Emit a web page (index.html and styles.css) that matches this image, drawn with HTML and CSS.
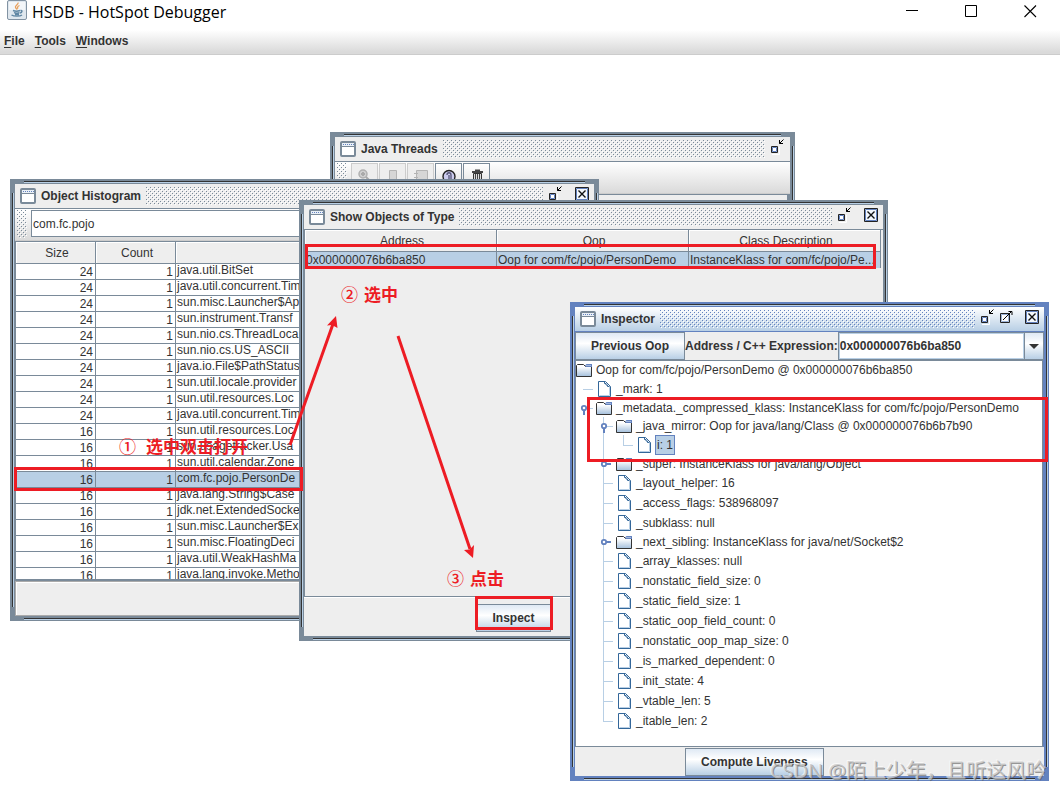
FILE: index.html
```html
<!DOCTYPE html>
<html lang="en">
<head>
<meta charset="utf-8">
<title>HSDB - HotSpot Debugger</title>
<link rel="stylesheet" href="styles.css">
</head>
<body>
<svg class="defs" aria-hidden="true">
  <defs>
    <linearGradient id="fold" x1="0" y1="0" x2="0" y2="1"><stop offset="0.2" stop-color="#fff"/><stop offset="1" stop-color="#a3bfdc"/></linearGradient>
  </defs>
  <symbol id="i-frame" viewBox="0 0 16 16">
    <rect x="1" y="1" width="14" height="14" rx="1" fill="#fff" stroke="#7a8a99" stroke-width="2"/>
    <path d="M2 2h12v3H2z" fill="#eaf0f6"/><path d="M3 3.500h11" stroke="#6382bf" stroke-dasharray="1 1"/><path d="M2 5.500h12" stroke="#7a8a99"/>
  </symbol>
  <symbol id="i-min" viewBox="0 0 16 16">
    <path d="M2 15.500h7.500V8" fill="none" stroke="#fff"/><path d="M1.500 7.500h6v6h-6z" fill="#fff" stroke="#222" /><path d="M2.500 8.500h4v4h-4z" fill="#fff" stroke="#6382bf"/>
    <path d="M9.500 1v3.500H13M9.500 4.500l4-4" fill="none" stroke="#000"/>
  </symbol>
  <symbol id="i-max" viewBox="0 0 16 16">
    <path d="M1.500 4.500h9v9h-9z" fill="#fff" stroke="#222"/><path d="M2.500 5.500h7v7h-7z" fill="none" stroke="#9db4d8"/>
    <path d="M4 11l9-9M9.500 2.500h3.500v3.500" fill="none" stroke="#000"/>
  </symbol>
  <symbol id="i-close" viewBox="0 0 16 16">
    <path d="M1.500 1.500h13v13h-13z" fill="#fff" stroke="#222"/><path d="M2.500 2.500h11v11h-11z" fill="#f4f8fc" stroke="#6382bf"/>
    <path d="M4.500 4.500l7 7M11.500 4.500l-7 7" stroke="#111" stroke-width="1.400"/>
  </symbol>
  <symbol id="i-folder" viewBox="0 0 16 18">
    <path d="M.5 15.500V4.500l1-1h6l2 2h6v10z" fill="url(#fold)" stroke="#333"/>
    <path d="M9 4.500l1.500-1.500H16v3h-6z" fill="#6382bf"/><path d="M10 4.500h5" stroke="#a3b8dd"/>
  </symbol>
  <symbol id="i-leaf" viewBox="0 0 16 20">
    <path d="M2.500 2.500h7l5 5v10h-12z" fill="#fff" stroke="#336699"/><path d="M3.500 16.500h10V8" fill="none" stroke="#b8cfe5"/>
    <path d="M8.500 3v1.500h1.500v1.500h1.500v1.500h2" fill="none" stroke="#336699"/>
  </symbol>
  <symbol id="i-open" viewBox="0 0 20 18">
    <path d="M11 9.500h6" stroke="#b8cfe5"/><path d="M8 10v6" stroke="#6382bf" stroke-width="2"/><circle cx="8" cy="9" r="2.200" fill="#fff" stroke="#6382bf" stroke-width="1.800"/>
  </symbol>
  <symbol id="i-shut" viewBox="0 0 20 18">
    <path d="M7.500 0v18" stroke="#b8cfe5"/><path d="M9 9h6" stroke="#6382bf" stroke-width="2"/><circle cx="8" cy="9" r="2.200" fill="#fff" stroke="#6382bf" stroke-width="1.800"/>
  </symbol>
</svg>

<header class="titlebar">
  <svg class="java" width="20" height="20" viewBox="0 0 20 20">
    <rect x=".5" y=".5" width="19" height="19" rx="1.500" fill="#dfe7ee" stroke="#8293a3"/>
    <path d="M2 2h16v8H2z" fill="#f3f6f9"/>
    <path d="M11 2.500c1 2-3.500 3-2.500 5 .4.900 1.300 1.300 1.500 2.200M12.500 5.500c-1.500.7-2.700 1.600-1.500 3.200" fill="none" stroke="#e8a05c" stroke-width="1.300"/>
    <path d="M6 10.500c2 .8 5 .8 7 0M7 12.700c2 .6 4 .6 5.500 0M13.500 10.500c2-.5 2 2-.5 2.500M4.500 15c2.500 1.500 8.500 1.500 10.500 0M8 14.500h4" fill="none" stroke="#5f86a3" stroke-width="1.400"/>
  </svg>
  <h1>HSDB - HotSpot Debugger</h1>
  <div class="sysbtns">
    <button aria-label="Minimize"><svg width="13" height="13"><path d="M0 5.500h12" stroke="#000"/></svg></button>
    <button aria-label="Maximize"><svg width="13" height="13"><path d="M.5.5h11v11H.5z" fill="none" stroke="#000"/></svg></button>
    <button aria-label="Close"><svg width="13" height="13"><path d="M.5.5l11.500 11.500M12 .5L.5 12" stroke="#000" stroke-width="1.100"/></svg></button>
  </div>
</header>
<nav class="menubar">
  <button><u>F</u>ile</button><button><u>T</u>ools</button><button><u>W</u>indows</button>
</nav>

<main class="desktop">
  <section class="frame threads">
    <div class="cap"><svg class="ico"><use href="#i-frame"/></svg><h2>Java Threads</h2><i class="bumps"></i>
      <button aria-label="Minimize"><svg class="ico"><use href="#i-min"/></svg></button></div>
    <div class="toolbar">
      <i class="bumps grip"></i>
      <div class="tools">
      <button disabled aria-label="Inspect Thread"><svg width="16" height="16"><circle cx="6" cy="5" r="4" fill="#d0d0d0" stroke="#b0b0b0" stroke-width="1.500"/><path d="M6 3v4M4 5h4M9 8l5 5" stroke="#aaa" stroke-width="2"/></svg></button>
      <button disabled aria-label="Stack Memory"><svg width="16" height="16"><path d="M4.500 1.500h7v13h-7z" fill="#d6d6d6" stroke="#b4b4b4"/></svg></button>
      <button disabled aria-label="Java Stack Trace"><svg width="16" height="16"><path d="M3.500 1.500h11v11h-11zM1 4.500h4M1 8.500h4" fill="#d6d6d6" stroke="#b4b4b4"/></svg></button>
      <button aria-label="Thread Information"><svg width="16" height="16"><circle cx="8" cy="7.500" r="6" fill="#ccccee" stroke="#222" stroke-width="1.400"/><path d="M6 6c0-3 4-3 4 0v6M8 6v6M6 12h5" fill="none" stroke="#555577" stroke-width="1.300"/></svg></button>
      <button aria-label="Find Crashes"><svg width="16" height="16"><path d="M3 2h11v2H3zM6 .5h5V2H6z" fill="#444"/><path d="M4.500 4.500h8v10h-8z" fill="#ddd" stroke="#333"/><path d="M6.500 5v9M8.500 5v9M10.500 5v9" stroke="#444"/></svg></button>
      </div>
    </div>
    <div class="pane"></div>
  </section>

  <section class="frame histogram">
    <div class="cap"><svg class="ico"><use href="#i-frame"/></svg><h2>Object Histogram</h2><i class="bumps"></i>
      <button aria-label="Minimize"><svg class="ico"><use href="#i-min"/></svg></button><button class="shut" aria-label="Close"><svg class="ico"><use href="#i-close"/></svg></button></div>
    <div class="toolbar search"><i class="bumps grip"></i><input type="text" aria-label="Find class" value="com.fc.pojo"></div>
    <div class="scroll">
    <table class="hist">
      <thead><tr><th class="num">Size</th><th class="num">Count</th><th></th></tr></thead>
      <tbody>
        <tr><td>24</td><td>1</td><td>java.util.BitSet</td></tr>
        <tr><td>24</td><td>1</td><td>java.util.concurrent.Tim</td></tr>
        <tr><td>24</td><td>1</td><td>sun.misc.Launcher$Ap</td></tr>
        <tr><td>24</td><td>1</td><td>sun.instrument.Transf</td></tr>
        <tr><td>24</td><td>1</td><td>sun.nio.cs.ThreadLoca</td></tr>
        <tr><td>24</td><td>1</td><td>sun.nio.cs.US_ASCII</td></tr>
        <tr><td>24</td><td>1</td><td>java.io.File$PathStatus</td></tr>
        <tr><td>24</td><td>1</td><td>sun.util.locale.provider</td></tr>
        <tr><td>24</td><td>1</td><td>sun.util.resources.Loc</td></tr>
        <tr><td>24</td><td>1</td><td>java.util.concurrent.Tim</td></tr>
        <tr><td>16</td><td>1</td><td>sun.util.resources.Loc</td></tr>
        <tr><td>16</td><td>1</td><td>sun.usagetracker.Usa</td></tr>
        <tr><td>16</td><td>1</td><td>sun.util.calendar.Zone</td></tr>
        <tr class="sel"><td>16</td><td>1</td><td>com.fc.pojo.PersonDe</td></tr>
        <tr><td>16</td><td>1</td><td>java.lang.String$Case</td></tr>
        <tr><td>16</td><td>1</td><td>jdk.net.ExtendedSocke</td></tr>
        <tr><td>16</td><td>1</td><td>sun.misc.Launcher$Ex</td></tr>
        <tr><td>16</td><td>1</td><td>sun.misc.FloatingDeci</td></tr>
        <tr><td>16</td><td>1</td><td>java.util.WeakHashMa</td></tr>
        <tr><td>16</td><td>1</td><td>java.lang.invoke.Metho</td></tr>
      </tbody>
    </table>
    </div>
    <div class="foot"></div>
  </section>

  <section class="frame objects">
    <div class="cap"><svg class="ico"><use href="#i-frame"/></svg><h2>Show Objects of Type</h2><i class="bumps"></i>
      <button aria-label="Minimize"><svg class="ico"><use href="#i-min"/></svg></button><button class="shut" aria-label="Close"><svg class="ico"><use href="#i-close"/></svg></button></div>
    <div class="list">
    <table class="objs">
      <thead><tr><th>Address</th><th>Oop</th><th>Class Description</th></tr></thead>
      <tbody><tr class="sel"><td>0x000000076b6ba850</td><td>Oop for com/fc/pojo/PersonDemo</td><td>InstanceKlass for com/fc/pojo/Pe...</td></tr></tbody>
    </table>
    </div>
    <div class="actions"><button class="btn">Inspect</button></div>
  </section>

  <p class="note n1"><span>①</span><b>选中双击打开</b></p>
  <p class="note n2"><span>②</span><b>选中</b></p>
  <p class="note n3"><span>③</span><b>点击</b></p>
  <svg class="arrows" width="560" height="560" viewBox="0 55 560 560">
    <path d="M290 445L333 324M398 336L470 549" fill="none" stroke="#ed1c24" stroke-width="3"/>
    <path d="M336 316l1.500 12-5.500-3-5 .5zM473 558l-9-8 5.500-.5 4.500-4.500z" fill="#ed1c24"/>
  </svg>
  <i class="mark m1"></i><i class="mark m2"></i><i class="mark m3"></i>

  <section class="frame active inspector">
    <div class="cap"><svg class="ico"><use href="#i-frame"/></svg><h2>Inspector</h2><i class="bumps"></i>
      <button aria-label="Minimize"><svg class="ico"><use href="#i-min"/></svg></button><button class="grow" aria-label="Maximize"><svg class="ico"><use href="#i-max"/></svg></button><button class="shut" aria-label="Close"><svg class="ico"><use href="#i-close"/></svg></button></div>
    <div class="address">
      <button class="btn">Previous Oop</button>
      <label for="addr">Address / C++ Expression:</label>
      <div class="combo"><input id="addr" type="text" value="0x000000076b6ba850"><button aria-label="History"><svg width="10" height="5"><path d="M0 0h10L5 5z" fill="#333"/></svg></button></div>
    </div>
    <div class="tree">
      <div class="row"><svg class="fi"><use href="#i-folder"/></svg><span>Oop for com/fc/pojo/PersonDemo @ 0x000000076b6ba850</span></div>
      <div class="row leaf"><i class="dash"></i><svg class="li"><use href="#i-leaf"/></svg><span>_mark: 1</span></div>
      <div class="row"><svg class="hd"><use href="#i-open"/></svg><svg class="fi"><use href="#i-folder"/></svg><span>_metadata._compressed_klass: InstanceKlass for com/fc/pojo/PersonDemo</span></div>
      <div class="row"><i></i><svg class="hd line"><use href="#i-open"/></svg><svg class="fi"><use href="#i-folder"/></svg><span>_java_mirror: Oop for java/lang/Class @ 0x000000076b6b7b90</span></div>
      <div class="row leaf"><i></i><i class="line"></i><i class="dash end"></i><svg class="li"><use href="#i-leaf"/></svg><span class="picked">i: 1</span></div>
      <div class="row"><i></i><svg class="hd"><use href="#i-shut"/></svg><svg class="fi"><use href="#i-folder"/></svg><span>_super: InstanceKlass for java/lang/Object</span></div>
      <div class="row leaf"><i></i><i class="dash line"></i><svg class="li"><use href="#i-leaf"/></svg><span>_layout_helper: 16</span></div>
      <div class="row leaf"><i></i><i class="dash line"></i><svg class="li"><use href="#i-leaf"/></svg><span>_access_flags: 538968097</span></div>
      <div class="row leaf"><i></i><i class="dash line"></i><svg class="li"><use href="#i-leaf"/></svg><span>_subklass: null</span></div>
      <div class="row"><i></i><svg class="hd"><use href="#i-shut"/></svg><svg class="fi"><use href="#i-folder"/></svg><span>_next_sibling: InstanceKlass for java/net/Socket$2</span></div>
      <div class="row leaf"><i></i><i class="dash line"></i><svg class="li"><use href="#i-leaf"/></svg><span>_array_klasses: null</span></div>
      <div class="row leaf"><i></i><i class="dash line"></i><svg class="li"><use href="#i-leaf"/></svg><span>_nonstatic_field_size: 0</span></div>
      <div class="row leaf"><i></i><i class="dash line"></i><svg class="li"><use href="#i-leaf"/></svg><span>_static_field_size: 1</span></div>
      <div class="row leaf"><i></i><i class="dash line"></i><svg class="li"><use href="#i-leaf"/></svg><span>_static_oop_field_count: 0</span></div>
      <div class="row leaf"><i></i><i class="dash line"></i><svg class="li"><use href="#i-leaf"/></svg><span>_nonstatic_oop_map_size: 0</span></div>
      <div class="row leaf"><i></i><i class="dash line"></i><svg class="li"><use href="#i-leaf"/></svg><span>_is_marked_dependent: 0</span></div>
      <div class="row leaf"><i></i><i class="dash line"></i><svg class="li"><use href="#i-leaf"/></svg><span>_init_state: 4</span></div>
      <div class="row leaf"><i></i><i class="dash line"></i><svg class="li"><use href="#i-leaf"/></svg><span>_vtable_len: 5</span></div>
      <div class="row leaf"><i></i><i class="dash end"></i><svg class="li"><use href="#i-leaf"/></svg><span>_itable_len: 2</span></div>
    </div>
    <div class="liveness"><button class="btn">Compute Liveness</button></div>
  </section>
  <i class="mark m4"></i>
  <p class="watermark">CSDN @陌上少年，且听这风吟</p>
</main>
</body>
</html>
```
FILE: styles.css
```css
* { box-sizing: border-box; }
body { margin: 0; min-height: 100vh; display: flex; flex-direction: column; background: #fff; color: #333; font: 12px/14px "Liberation Sans", Arial, sans-serif; overflow: hidden; }
h1, h2, p { margin: 0; }
svg { display: block; flex: none; }
button, input { font: inherit; color: inherit; margin: 0; padding: 0; border: 0; background: none; }
.defs { position: absolute; width: 0; height: 0; }

.titlebar { display: flex; align-items: center; height: 24px; padding: 0 23px 0 7px; color: #000; }
.java { align-self: flex-start; margin-right: 5px; }
.titlebar h1 { font: 16px/24px "Open Sans", "Noto Sans", sans-serif; }
.sysbtns { display: flex; gap: 46px; margin-left: auto; padding-bottom: 2px; }
.menubar { display: flex; gap: 10px; align-items: center; height: 31px; padding: 4px 4px 0; background: linear-gradient(#fff 20%, #dadada 94%); border-bottom: 1px solid #ccc; }
.menubar button { font-weight: bold; }
.menubar u { text-underline-offset: 2px; }

.desktop { position: relative; flex: 1; }
.frame {
  --edge: #7a8a99; --dark: #333; --lite: #b8cfe5;
  position: absolute; display: flex; flex-direction: column; padding: 5px;
  background:
    linear-gradient(var(--dark), var(--dark)) 14px 2px / calc(100% - 28px) 1px no-repeat,
    linear-gradient(var(--lite), var(--lite)) 14px 3px / calc(100% - 28px) 1px no-repeat,
    linear-gradient(var(--dark), var(--dark)) 14px calc(100% - 2px) / calc(100% - 28px) 1px no-repeat,
    linear-gradient(var(--lite), var(--lite)) 14px calc(100% - 1px) / calc(100% - 28px) 1px no-repeat,
    linear-gradient(var(--dark), var(--dark)) 2px 14px / 1px calc(100% - 28px) no-repeat,
    linear-gradient(var(--lite), var(--lite)) 3px 14px / 1px calc(100% - 28px) no-repeat,
    linear-gradient(var(--dark), var(--dark)) calc(100% - 2px) 14px / 1px calc(100% - 28px) no-repeat,
    linear-gradient(var(--lite), var(--lite)) calc(100% - 1px) 14px / 1px calc(100% - 28px) no-repeat,
    var(--edge);
}
.active { --edge: #6382bf; }
.threads { left: 330px; top: 77px; width: 465px; height: 300px; }
.histogram { left: 10px; top: 124px; width: 589px; height: 442px; }
.objects { left: 299px; top: 145px; width: 589px; height: 441px; }
.inspector { left: 570px; top: 247px; width: 479px; height: 479px; }

.cap { display: flex; align-items: center; flex: none; height: 25px; padding: 0 4px 0 5px; background: #eee; border-bottom: 1px solid var(--edge); }
.active .cap { background: linear-gradient(#fff, #b8cfe5); }
.cap h2 { margin: 0 5px; font-size: 12px; line-height: 14px; }
.cap button { align-self: flex-start; margin-top: 2px; }
.cap .shut { margin-left: 10px; }
.cap .grow { margin-left: 3px; }
.cap .grow + .shut { margin-left: 9px; }
.ico { width: 16px; height: 16px; }
.bumps {
  --dot: #7a8a99;
  flex: 1; height: 18px; margin-right: 5px;
  background:
    conic-gradient(from 270deg at 1px 1px, var(--dot) 90deg, transparent 0) 0 0 / 4px 4px,
    conic-gradient(from 270deg at 1px 1px, var(--dot) 90deg, transparent 0) 2px 2px / 4px 4px,
    conic-gradient(from 270deg at 1px 1px, #fff 90deg, transparent 0) 1px 1px / 4px 4px,
    conic-gradient(from 270deg at 1px 1px, #fff 90deg, transparent 0) 3px 3px / 4px 4px;
}
.active .bumps { --dot: #6382bf; }

.toolbar { display: flex; flex: none; height: 32px; padding: 1px 2px 2px; background: linear-gradient(#fff, #dadada); border-bottom: 1px solid #ccc; }
.grip { flex: none; width: 10px; height: auto; margin: 0 4px 0 0; }
.tools { display: flex; gap: 1px; }
.tools button { display: grid; place-items: center; width: 27px; border: 1px solid #7a8a99; background: linear-gradient(#fff, #ddd); }
.tools button:disabled { border-color: #ccc; background: #eee; }
.pane { flex: 1; margin-right: 2px; background: #eee; border: 1px solid #7a8a99; }
.search input { flex: 1; min-width: 0; padding: 0 1px; height: 27px; background: #fff; border: 1px solid #7a8a99; }

.scroll { height: 339px; overflow: hidden; background: #fff; border: 1px solid #7a8a99; border-right: 0; }
table { width: 100%; table-layout: fixed; border-collapse: separate; border-spacing: 0; }
th { font-weight: normal; height: 22px; padding: 0 0 0 3px; background: #eee; border-right: 1px solid #7a8a99; border-bottom: 1px solid #7a8a99; box-shadow: inset 1px 1px #fff; }
td { height: 16px; padding: 0 1px; line-height: 14px; white-space: nowrap; overflow: hidden; border-right: 1px solid #7a8a99; }
.hist .num { width: 80px; }
.hist td { border-bottom: 1px solid #7a8a99; text-align: right; padding: 0 2px 0 1px; }
.hist td:last-child { text-align: left; line-height: 13px; padding-bottom: 2px; }
.sel { background: #b8cfe5; }
.foot { flex: 1; margin-top: 1px; background: #eee; border: 1px solid #aaa; box-shadow: inset 1px 1px #fff; }

.list { flex: 1; padding-right: 2px; background: #eee; border-bottom: 1px solid #7a8a99; border-left: 1px solid #7a8a99; }
.actions { display: flex; justify-content: center; padding: 6px 160px 4px 0; background: #eee; border-top: 1px solid #fff; }
.btn { height: 28px; padding: 0 15px; font-weight: bold; white-space: nowrap; border: 1px solid #7a8a99; background: linear-gradient(#dfe9f4, #fff 40%, #b8cfe5); }

.address { display: flex; align-items: center; flex: none; height: 28px; background: #eee; }
.address label { font-weight: bold; white-space: nowrap; }
.combo { display: flex; flex: 1; min-width: 0; height: 28px; border: 1px solid #7a8a99; background: #fff; }
.combo input { flex: 1; min-width: 0; padding: 0 1px; font-weight: bold; box-shadow: inset 0 0 0 1px #b8cfe5; }
.combo button { display: grid; place-items: center; width: 19px; border-left: 1px solid #7a8a99; background: linear-gradient(#dfe9f4, #fff 40%, #b8cfe5); }
.tree { flex: 1; margin-right: 1px; background: #fff; border: 1px solid #7a8a99; overflow: hidden; }
.row { display: flex; align-items: center; height: 18px; white-space: nowrap; }
.row.leaf { height: 20px; }
.row i { align-self: stretch; width: 20px; background-repeat: no-repeat; }
.row span { margin-left: 3px; padding: 2px 1px; }
.row .picked { background: #b8cfe5; border: 1px solid #6382bf; }
.fi { width: 16px; height: 18px; }
.li { width: 16px; height: 20px; }
.hd { width: 20px; height: 18px; }
.row .line { background: linear-gradient(#b8cfe5, #b8cfe5) 7px 0 / 1px 100% no-repeat; }
.row .dash { background: linear-gradient(#b8cfe5, #b8cfe5) 7px 10px / 10px 1px no-repeat; }
.row .dash.line { background: linear-gradient(#b8cfe5, #b8cfe5) 7px 10px / 10px 1px no-repeat, linear-gradient(#b8cfe5, #b8cfe5) 7px 0 / 1px 100% no-repeat; }
.row .dash.end { background: linear-gradient(#b8cfe5, #b8cfe5) 7px 10px / 10px 1px no-repeat, linear-gradient(#b8cfe5, #b8cfe5) 7px 0 / 1px 10px no-repeat; }
.liveness { display: flex; flex: none; padding: 1px 0 0 110px; background: #eee; }

.mark { position: absolute; border: 3px solid #ed1c24; }
.m1 { left: 14px; top: 412px; width: 289px; height: 24px; }
.m2 { left: 305px; top: 189px; width: 571px; height: 25px; }
.m3 { left: 475px; top: 541px; width: 78px; height: 34px; }
.m4 { left: 587px; top: 342px; width: 461px; height: 65px; }
.arrows { position: absolute; left: 0; top: 0; }
.note { position: absolute; display: flex; align-items: center; gap: 6px; color: #ed1c24; font: 500 17px/20px "Noto Sans CJK SC", sans-serif; white-space: nowrap; }
.n1 { left: 119px; top: 381px; gap: 10px; }
.n2 { left: 341px; top: 229px; }
.n3 { left: 447px; top: 513px; }
.watermark { position: absolute; left: 770px; top: 702px; color: rgba(200, 200, 200, .8); font: 20px/28px "Open Sans", "Noto Sans CJK SC", sans-serif; text-shadow: 1px 1px 0 rgba(90, 90, 90, .6), -1px -1px 0 rgba(255, 255, 255, .6); white-space: nowrap; }
```
